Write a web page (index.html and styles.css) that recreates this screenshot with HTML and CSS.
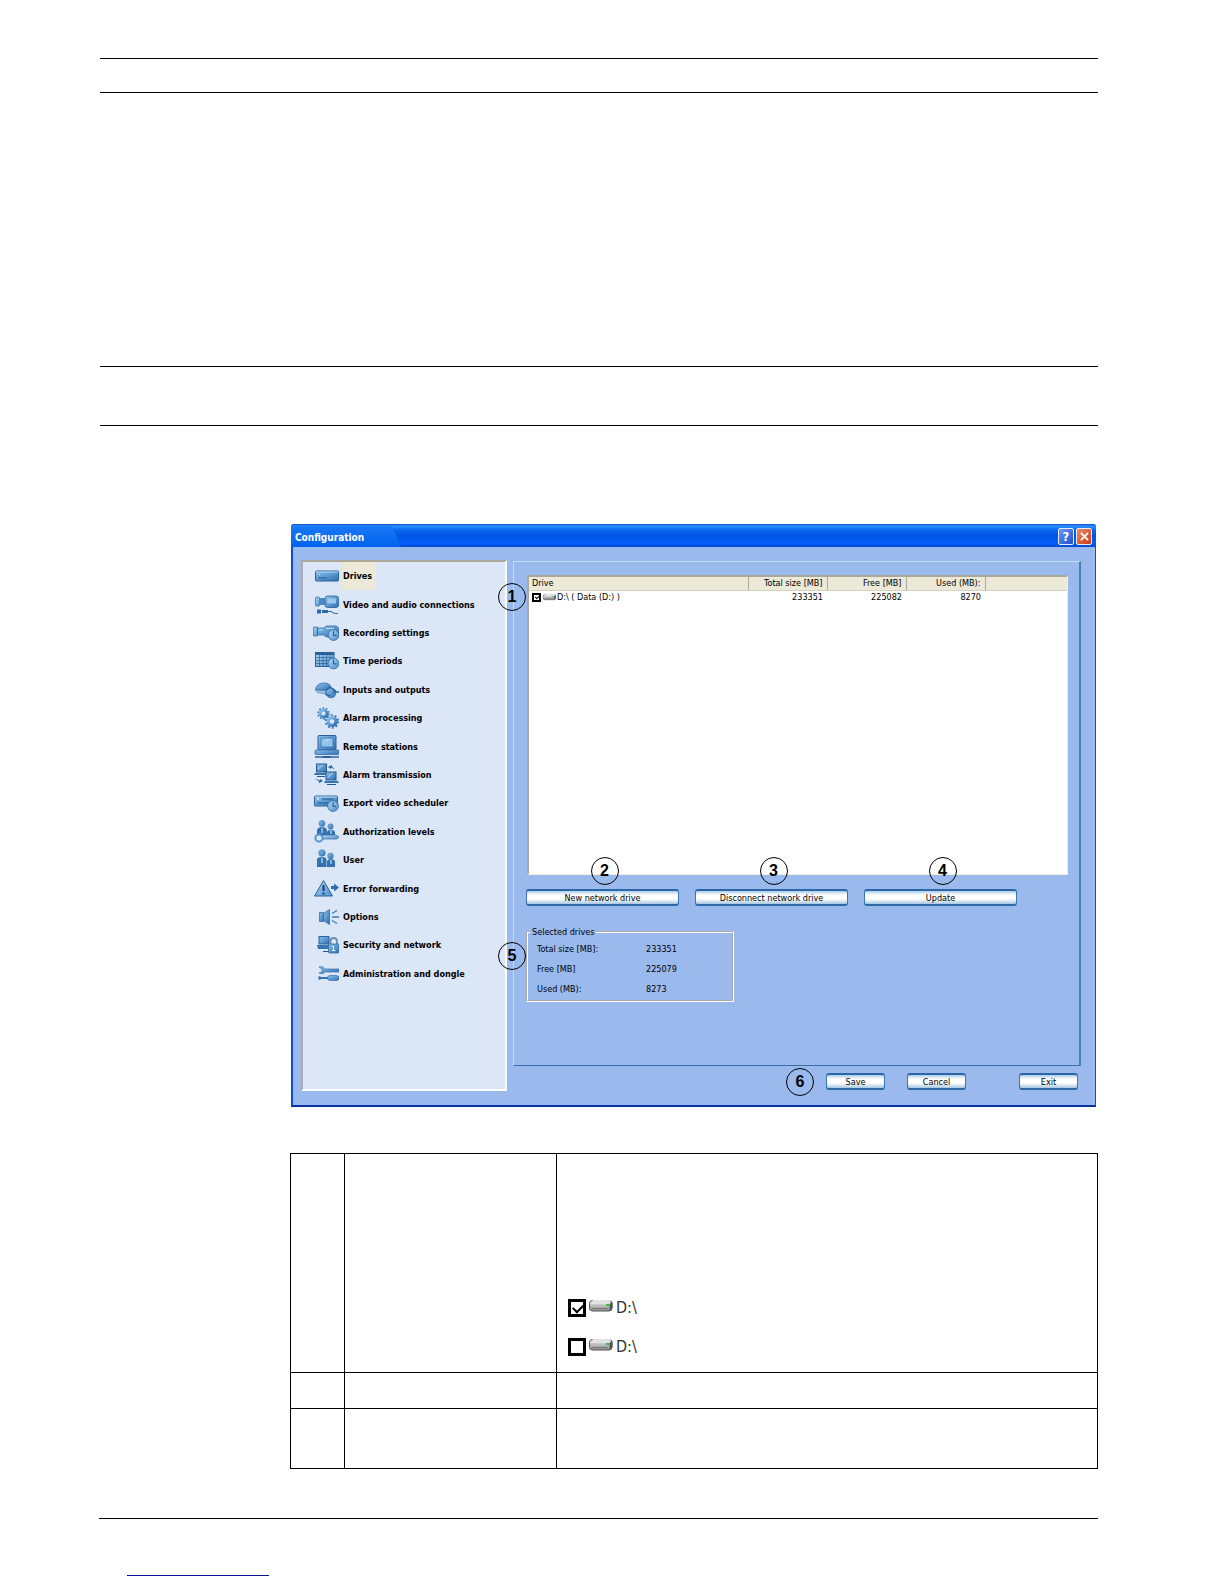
FILE: index.html
```html
<!DOCTYPE html>
<html lang="en">
<head>
    <meta charset="UTF-8">
    <meta name="viewport" content="width=device-width, initial-scale=1.0">
    <title>Configuration</title>
    <link rel="stylesheet" href="styles.css">
</head>
<body>
    <!-- shared icon parts -->
    <svg class="defs" aria-hidden="true">
        <defs>
            <linearGradient id="blue" x1="0" y1="0" x2="1" y2="1">
                <stop offset="0" stop-color="#8cc4ee"/>
                <stop offset="1" stop-color="#2f6fb0"/>
            </linearGradient>
            <linearGradient id="pale" x1="0" y1="0" x2="1" y2="1">
                <stop offset="0" stop-color="#b4d8f4"/>
                <stop offset="1" stop-color="#4c90d0"/>
            </linearGradient>
            <linearGradient id="grey" x1="0" y1="0" x2="0" y2="1">
                <stop offset="0" stop-color="#eeeeee"/>
                <stop offset="1" stop-color="#8c8c8c"/>
            </linearGradient>
            <symbol id="clock" viewBox="0 0 12 12">
                <circle cx="6" cy="6" r="5.4" fill="url(#pale)" stroke="#2a659f" stroke-width=".8"/>
                <path d="M6 2v4.4h3" fill="none" stroke="#22568e"/>
            </symbol>
            <symbol id="hdd" viewBox="0 0 24 13">
                <rect x=".5" y="1.500" width="22.500" height="10.500" rx="3" fill="url(#grey)" stroke="#555"/>
                <path d="M4 1h18l-2.500 4H1.500z" fill="#e2e2e2"/>
                <path d="M20.500 5v7l3-3V3z" fill="#555"/>
                <path d="M3 9.500h16" stroke="#777"/>
                <rect x="17" y="5" width="3" height="2" fill="#3fbf3f"/>
            </symbol>
            <symbol id="gear" viewBox="0 0 14 14">
                <circle cx="7" cy="7" r="5.800" fill="none" stroke="#3a77b5" stroke-width="1.800" stroke-dasharray="1.800 1.840"/>
                <circle cx="7" cy="7" r="3.700" fill="none" stroke="url(#blue)" stroke-width="3"/>
            </symbol>
        </defs>
    </svg>

    <div class="page">
        <header class="page-header"></header>
        <div class="section-header"></div>

        <main class="content">
            <section class="window">
                <div class="titlebar">
                    <h1>Configuration</h1>
                    <button class="title-btn help" aria-label="Help">?</button>
                    <button class="title-btn close" aria-label="Close">
                        <svg viewBox="0 0 10 10"><path d="M1 1l8 8M9 1l-8 8" stroke="#fff" stroke-width="2"/></svg>
                    </button>
                </div>

                <div class="window-body">
                    <nav class="sidebar">
                        <ul>
                            <li><a href="#" class="active">
                                <svg viewBox="0 0 26 24"><rect x="2.500" y="7" width="23" height="10" rx="1" fill="url(#blue)" stroke="#2d6199"/><path d="M3 8h22" stroke="#b9dcf5"/><circle cx="6.500" cy="10.500" r="1.200" fill="#d9efff" stroke="#28598e" stroke-width=".5"/><path d="M5 14h9" stroke="#28598e"/></svg>
                                <span>Drives</span></a></li>
                            <li><a href="#">
                                <svg viewBox="0 0 26 24"><rect x="2.500" y="4" width="4" height="9" rx="1" fill="url(#pale)" stroke="#34699f" stroke-width=".7"/><path d="M6.500 5h7v7h-7z" fill="#4c8cc6"/><rect x="12" y="3" width="13.500" height="11.500" rx="2.500" fill="url(#blue)" stroke="#2d6199" stroke-width=".8"/><rect x="14.500" y="5.500" width="8.500" height="5" rx="1" fill="#9ccaf0"/><path d="M4 16.500h4v4H4zM9 17h6v3H9zM15 18h4v1h-4z" fill="#2d6ba8"/><path d="M18 18.500q2 2.500 7 2" fill="none" stroke="#2d6ba8"/></svg>
                                <span>Video and audio connections</span></a></li>
                            <li><a href="#">
                                <svg viewBox="0 0 26 24"><path d="M.5 6h4v9h-4z" fill="url(#pale)" stroke="#34699f" stroke-width=".7"/><path d="M4.500 7h6l3-2h10l2 2v8l-3 1h-9l-3-2h-6z" fill="url(#blue)" stroke="#2d6199" stroke-width=".7"/><path d="M6 9h4M13 7.500h8" stroke="#b9dcf5"/><use href="#clock" x="14.500" y="8" width="12" height="12"/></svg>
                                <span>Recording settings</span></a></li>
                            <li><a href="#">
                                <svg viewBox="0 0 26 24"><rect x="2.500" y="3.500" width="18.500" height="14" fill="url(#pale)" stroke="#2d6199"/><path d="M3 5h18" stroke="#2d6199" stroke-width="2"/><path d="M3 8.500h18M3 11.500h18M3 14.500h18M6.500 6v11M10 6v11M13.500 6v11M17 6v11" stroke="#2d6199" stroke-width=".7"/><use href="#clock" x="14.500" y="8.500" width="12" height="12"/></svg>
                                <span>Time periods</span></a></li>
                            <li><a href="#">
                                <svg viewBox="0 0 26 24"><path d="M2.500 11.500q1-6 7.500-6.500t8 4l-5 3.500z" fill="url(#blue)" stroke="#2d6199" stroke-width=".7"/><path d="M2.500 12l8 .5 3 2-3 1-6-1z" fill="#a8c4dd" stroke="#34699f" stroke-width=".6"/><circle cx="18" cy="15" r="4.800" fill="url(#blue)" stroke="#2d6199" stroke-width=".7"/><path d="M13 12l4-3 6 4M20 14h6M12 16l5 2" fill="none" stroke="#2b669f" stroke-width="1.400"/></svg>
                                <span>Inputs and outputs</span></a></li>
                            <li><a href="#">
                                <svg viewBox="0 0 26 24"><use href="#gear" x="4" y="1" width="13" height="13"/><use href="#gear" x="11.500" y="8" width="15" height="15"/></svg>
                                <span>Alarm processing</span></a></li>
                            <li><a href="#">
                                <svg viewBox="0 0 26 24"><rect x="5" y=".5" width="18" height="14.500" rx="1" fill="url(#blue)" stroke="#2d6199"/><rect x="8" y="3" width="12" height="9" fill="#8fc2ec" stroke="#2f6ca8" stroke-width=".7"/><path d="M9 9l5-5h4z" fill="#b5daf6"/><rect x="2" y="15" width="24" height="4.500" rx="1" fill="url(#blue)" stroke="#2d6199" stroke-width=".7"/><path d="M2 22h24M9 22h10" stroke="#2763a0" stroke-width="1.500"/><path d="M10 21h8v2h-8z" fill="#2763a0"/></svg>
                                <span>Remote stations</span></a></li>
                            <li><a href="#">
                                <svg viewBox="0 0 26 24"><rect x="3.500" y="1" width="10" height="8" fill="url(#blue)" stroke="#23578d"/><path d="M5 6l5-4" stroke="#b5daf6"/><path d="M2 10h13v2H1z" fill="#3674b1"/><path d="M4 13.500h8" stroke="#23578d"/><rect x="13" y="9" width="10" height="8" fill="url(#blue)" stroke="#23578d"/><path d="M15 14l5-4" stroke="#b5daf6"/><path d="M12 18h13l1 2H11z" fill="#3674b1"/><path d="M14 21.500h9" stroke="#23578d"/><path d="M15 4l4-2v1.500l3 3-4-2v1.500zM10 18l-4 2v-1.500l-4-3 5 2V16z" fill="#2763a0"/></svg>
                                <span>Alarm transmission</span></a></li>
                            <li><a href="#">
                                <svg viewBox="0 0 26 24"><rect x="1.500" y="5" width="23" height="10" rx="1" fill="url(#blue)" stroke="#2d6199"/><path d="M2 6h22" stroke="#b9dcf5"/><circle cx="5" cy="8" r="1" fill="#d9efff"/><path d="M4 12h11M9 8h11" stroke="#28598e"/><use href="#clock" x="14" y="9" width="12" height="12"/></svg>
                                <span>Export video scheduler</span></a></li>
                            <li><a href="#">
                                <svg viewBox="0 0 26 24"><circle cx="9" cy="3.500" r="3" fill="url(#blue)" stroke="#34699f" stroke-width=".5"/><circle cx="17.500" cy="6.500" r="2.700" fill="url(#blue)" stroke="#34699f" stroke-width=".5"/><path d="M4 17V10q1-3 5-3t5 3v7zM14 17v-5q1-2.500 4-2.500t4 2.500v5z" fill="#3573b0"/><path d="M9 8v5M18 10v4" stroke="#9ccaf0" stroke-width="1.500"/><path d="M9 15h14l3 2-2 2H9z" fill="url(#pale)" stroke="#34699f" stroke-width=".7"/><circle cx="6" cy="18" r="3.600" fill="#dbe6f6" stroke="#5593cc" stroke-width="2"/></svg>
                                <span>Authorization levels</span></a></li>
                            <li><a href="#">
                                <svg viewBox="0 0 26 24"><circle cx="9" cy="5" r="3.300" fill="url(#blue)" stroke="#34699f" stroke-width=".5"/><circle cx="17.500" cy="8" r="2.900" fill="url(#blue)" stroke="#34699f" stroke-width=".5"/><path d="M4 19v-8q1-2 5-2t4.500 2v8zM14 19v-6q1-2 4-2t4 2v6z" fill="#3573b0"/><path d="M9 10v5M18 12v4" stroke="#9ccaf0" stroke-width="1.500"/></svg>
                                <span>User</span></a></li>
                            <li><a href="#">
                                <svg viewBox="0 0 26 24"><path d="M10.500 3.500l9 15.500h-18z" fill="url(#pale)" stroke="#2d6199" stroke-linejoin="round"/><path d="M10.500 8v6M10.500 15.500v2" stroke="#173f6d" stroke-width="2"/><path d="M18 9h3V6.500l5 4-5 4V12h-3z" fill="#2f6dab"/></svg>
                                <span>Error forwarding</span></a></li>
                            <li><a href="#">
                                <svg viewBox="0 0 26 24"><path d="M6.500 7.500h4v9h-4z" fill="url(#blue)" stroke="#2d6199" stroke-width=".7"/><path d="M10.500 8.500l6-4v15l-6-4z" fill="url(#blue)" stroke="#2d6199" stroke-width=".7"/><path d="M19 8.500l5-3M19 12h7M19 15.500l5 3" stroke="#3f7fbc" stroke-width="1.400"/></svg>
                                <span>Options</span></a></li>
                            <li><a href="#">
                                <svg viewBox="0 0 26 24"><rect x="6" y="3.500" width="10" height="7.500" fill="url(#blue)" stroke="#2d6199"/><path d="M4 12h12v4H5z" fill="#3674b1"/><path d="M10 18.500h6" stroke="#23578d"/><path d="M17.500 12V8q0-3 3.200-3t3.200 3v4" fill="none" stroke="#6a8eb2" stroke-width="1.800"/><rect x="15.500" y="11" width="10.500" height="9" rx="1" fill="url(#blue)" stroke="#2d6199" stroke-width=".7"/><path d="M20.500 13v5M19 13.500h2M19 17.500h3.500" stroke="#e4f2fd"/></svg>
                                <span>Security and network</span></a></li>
                            <li><a href="#">
                                <svg viewBox="0 0 26 24"><path d="M6 5q4-1.500 6 2h14v3H12q-2 3-6 1l3-1V7z" fill="url(#blue)" stroke="#2d6199" stroke-width=".6"/><path d="M5.500 14l3 1h7v2h-7l-3 1z" fill="#3674b1"/><rect x="14.500" y="13.500" width="11.500" height="5" rx="2.500" fill="url(#blue)" stroke="#2d6199" stroke-width=".6"/></svg>
                                <span>Administration and dongle</span></a></li>
                        </ul>
                    </nav>

                    <div class="main">
                        <div class="panel">
                            <div class="drive-list">
                                <span class="callout callout-list">1</span>
                                <table>
                                    <colgroup><col class="c-drive"><col class="c-num"><col class="c-num"><col class="c-num"><col></colgroup>
                                    <thead>
                                        <tr><th>Drive</th><th>Total size [MB]</th><th>Free [MB]</th><th>Used (MB):</th><th></th></tr>
                                    </thead>
                                    <tbody>
                                        <tr>
                                            <td>
                                                <label class="drive">
                                                    <input type="checkbox" checked>
                                                    <svg viewBox="0 0 24 13"><use href="#hdd"/></svg>
                                                    D:\ ( Data (D:) )
                                                </label>
                                            </td>
                                            <td>233351</td><td>225082</td><td>8270</td><td></td>
                                        </tr>
                                    </tbody>
                                </table>
                            </div>

                            <div class="drive-buttons">
                                <div class="btn-wrap"><span class="callout">2</span><button class="btn">New network drive</button></div>
                                <div class="btn-wrap"><span class="callout">3</span><button class="btn">Disconnect network drive</button></div>
                                <div class="btn-wrap"><span class="callout">4</span><button class="btn">Update</button></div>
                            </div>

                            <fieldset class="selected">
                                <legend>Selected drives</legend>
                                <span class="callout callout-group">5</span>
                                <dl>
                                    <dt>Total size [MB]:</dt><dd>233351</dd>
                                    <dt>Free [MB]</dt><dd>225079</dd>
                                    <dt>Used (MB):</dt><dd>8273</dd>
                                </dl>
                            </fieldset>
                        </div>

                        <div class="actions">
                            <span class="callout">6</span>
                            <button class="btn">Save</button>
                            <button class="btn">Cancel</button>
                            <button class="btn exit">Exit</button>
                        </div>
                    </div>
                </div>
            </section>

            <table class="legend">
                <colgroup><col class="l-num"><col class="l-name"><col></colgroup>
                <tr class="row-tall">
                    <td></td>
                    <td></td>
                    <td>
                        <label class="drive big"><input type="checkbox" checked><svg viewBox="0 0 24 13"><use href="#hdd"/></svg>D:\</label>
                        <label class="drive big"><input type="checkbox"><svg viewBox="0 0 24 13"><use href="#hdd"/></svg>D:\</label>
                    </td>
                </tr>
                <tr class="row-short"><td></td><td></td><td></td></tr>
                <tr class="row-mid"><td></td><td></td><td></td></tr>
            </table>
        </main>

        <footer class="page-footer">
            <a href="#" aria-label="Link"></a>
        </footer>
    </div>
</body>
</html>
```
FILE: styles.css
```css
* {
    box-sizing: border-box;
}
body {
    margin: 0;
    background-color: #fff;
    color: #000;
    font-family: "DejaVu Sans Condensed", "DejaVu Sans", sans-serif;
    font-size: 9px;
    line-height: 12px;
}
button {
    font-family: inherit;
    padding: 0;
    cursor: pointer;
}
.defs {
    position: absolute;
    width: 0;
    height: 0;
}
.page {
    padding: 58px 126px 0 100px;
}
.page-header {
    height: 35px;
    border-top: 1px solid #000;
    border-bottom: 1px solid #000;
}
.section-header {
    height: 60px;
    margin-top: 273px;
    border-top: 1px solid #000;
    border-bottom: 1px solid #000;
}
.content {
    margin: 98px 0 0 190px;
}

/* window */
.window {
    margin: 0 2px 0 1px;
    background-color: #9ab9ed;
    border: solid #0a4fd0;
    border-width: 0 1px 2px 2px;
    border-bottom-color: #0532a0;
    border-radius: 3px 3px 0 0;
}
.titlebar {
    display: flex;
    align-items: center;
    gap: 2px;
    height: 23px;
    margin: 0 -1px 0 -2px;
    padding: 0 4px 0 0;
    border-radius: 3px 3px 0 0;
    background: linear-gradient(#0a4cc0, #2f92ff 2px, #0a66ee 6px, #0054e3 12px, #0560fb 19px, #0048d0);
}
.titlebar h1 {
    width: 110px;
    height: 21px;
    margin: 2px auto 0 0;
    padding: 5px 0 0 4px;
    color: #fff;
    font-size: 10px;
    line-height: 14px;
    background: linear-gradient(#1a78f6, #0062ee);
    clip-path: polygon(0 0, 92% 0, 100% 100%, 0 100%);
}
.title-btn {
    display: flex;
    align-items: center;
    justify-content: center;
    width: 16px;
    height: 17px;
    margin-top: 1px;
    border: 1px solid #e8f0ff;
    border-radius: 2px;
    color: #fff;
    font-size: 13px;
    font-weight: bold;
}
.title-btn svg {
    width: 9px;
    height: 9px;
}
.help {
    background: linear-gradient(135deg, #6d97f2, #1e53cf);
}
.close {
    background: linear-gradient(135deg, #ee8a6a, #cf3a12);
}
.window-body {
    display: grid;
    grid-template-columns: 206px 1fr;
    gap: 6px;
    padding: 13px 14px 14px 8px;
}

/* sidebar */
.sidebar {
    height: 531px;
    background-color: #dbe6f6;
    border: solid #fff;
    border-width: 2px;
    border-top-color: #aca899;
    border-left-color: #b4aca4;
}
.sidebar ul {
    display: grid;
    grid-auto-rows: 1fr;
    height: 426px;
    margin: 0;
    padding: 0 0 0 10px;
    list-style: none;
}
.sidebar a {
    display: flex;
    align-items: center;
    gap: 3px;
    height: 100%;
    color: #000;
    font-weight: bold;
    text-decoration: none;
}
.sidebar svg {
    width: 26px;
    height: 24px;
}
.sidebar span {
    padding: 8px 4px 8px 1px;
}
.sidebar .active span {
    background-color: #ece9d8;
}

/* main panel */
.main {
    display: flex;
    flex-direction: column;
}
.panel {
    height: 505px;
    margin-top: 1px;
    padding: 13px 11px 0 13px;
    border: 1px solid #c3dbf8;
    border-right: 2px solid #477fb8;
    border-bottom-color: #3a6fae;
}
.drive-list {
    position: relative;
    height: 300px;
    background-color: #fff;
    border: solid #aca899;
    border-width: 2px 1px 1px 2px;
    border-right-color: #f1efe2;
    border-bottom-color: #f1efe2;
}
.drive-list table {
    width: 100%;
    table-layout: fixed;
    border-collapse: collapse;
}
.c-drive {
    width: 219px;
}
.c-num {
    width: 79px;
}
.drive-list th {
    height: 13px;
    padding: 0 4px 0 3px;
    background-color: #ece9d8;
    border-right: 1px solid #aca899;
    border-bottom: 1px solid #d6d2c2;
    font-weight: normal;
    line-height: 12px;
    text-align: right;
}
.drive-list th:first-child,
.drive-list td:first-child {
    text-align: left;
}
.drive-list th:last-child {
    border-right: 0;
}
.drive-list td {
    height: 14px;
    padding: 0 4px 0 3px;
    text-align: right;
}
.drive {
    display: flex;
    align-items: center;
    gap: 1px;
}
.drive svg {
    width: 13px;
    height: 8px;
}
.drive input {
    appearance: none;
    position: relative;
    width: 9px;
    height: 9px;
    margin: 0 1px 0 0;
    background-color: #fff;
    border: 2px solid #000;
}
.drive input:checked::after {
    content: "";
    position: absolute;
    left: 1px;
    top: 0;
    width: 4px;
    height: 2px;
    border: solid #000;
    border-width: 0 0 1px 1px;
    transform: rotate(-45deg);
}

/* buttons */
.drive-buttons {
    display: grid;
    grid-template-columns: repeat(3, 153px);
    gap: 16px;
    margin: 14px 0 0 -1px;
}
.btn-wrap {
    position: relative;
}
.btn {
    display: block;
    width: 100%;
    height: 17px;
    border: 1px solid #3a75b4;
    border-top: 2px solid #2d66a6;
    border-bottom: 2px solid #2f69a8;
    border-radius: 3px;
    background: linear-gradient(#a8cbea, #fff 4px, #fff 8px, #a5c6e2);
    font-size: 9px;
    line-height: 12px;
}
.callout {
    display: flex;
    align-items: center;
    justify-content: center;
    width: 28px;
    height: 28px;
    border: 1px solid #000;
    border-radius: 50%;
    font-family: "Liberation Sans", Arial, sans-serif;
    font-size: 16px;
    font-weight: bold;
    line-height: 16px;
}
.btn-wrap .callout {
    position: absolute;
    left: 50%;
    bottom: 21px;
    margin-left: -12px;
}
.callout-list,
.callout-group {
    position: absolute;
    left: -31px;
    top: 6px;
}

/* selected drives */
.selected {
    position: relative;
    width: 208px;
    height: 76px;
    margin: 20px 0 0 -1px;
    padding: 5px 0 0 9px;
    border: 2px groove #fff;
    border-color: #fff;
}
.selected legend {
    margin-left: -7px;
    padding: 0 2px;
}
.callout-group {
    left: -30px;
    top: 4px;
}
.selected dl {
    display: grid;
    grid-template-columns: 109px 1fr;
    row-gap: 8px;
    margin: 0;
}
.selected dd {
    margin: 0;
}

/* bottom actions */
.actions {
    display: flex;
    align-items: center;
    justify-content: flex-end;
    height: 31px;
    padding-right: 3px;
    margin-bottom: -6px;
}
.actions .btn {
    width: 59px;
    margin-left: 22px;
}
.actions .callout + .btn {
    margin-left: 12px;
}
.actions .exit {
    margin-left: 53px;
}

/* table under the window */
.legend {
    width: 100%;
    margin-top: 46px;
    table-layout: fixed;
    border-collapse: collapse;
}
.legend td {
    padding: 0 11px;
    border: 1px solid #000;
}
.l-num {
    width: 54px;
}
.l-name {
    width: 212px;
}
.row-tall {
    height: 219px;
}
.row-tall td {
    vertical-align: bottom;
}
.row-short {
    height: 36px;
}
.row-mid {
    height: 60px;
}
.big {
    height: 24px;
    margin-bottom: 15px;
    gap: 3px;
    color: #333;
    font-size: 16px;
    line-height: 24px;
}
.big + .big {
    margin-bottom: 13px;
}
.big svg {
    width: 24px;
    height: 13px;
    margin-bottom: 5px;
}
.big input {
    width: 18px;
    height: 18px;
    margin: 0;
    border-width: 3px;
}
.big input:checked::after {
    left: 2px;
    top: 2px;
    width: 8px;
    height: 5px;
    border-width: 0 0 2px 2px;
}

/* footer */
.page-footer {
    margin: 49px 0 0 -1px;
    padding: 56px 0 8px 28px;
    border-top: 1px solid #000;
}
.page-footer a {
    display: block;
    width: 142px;
    border-bottom: 1px solid #10109a;
}
```
